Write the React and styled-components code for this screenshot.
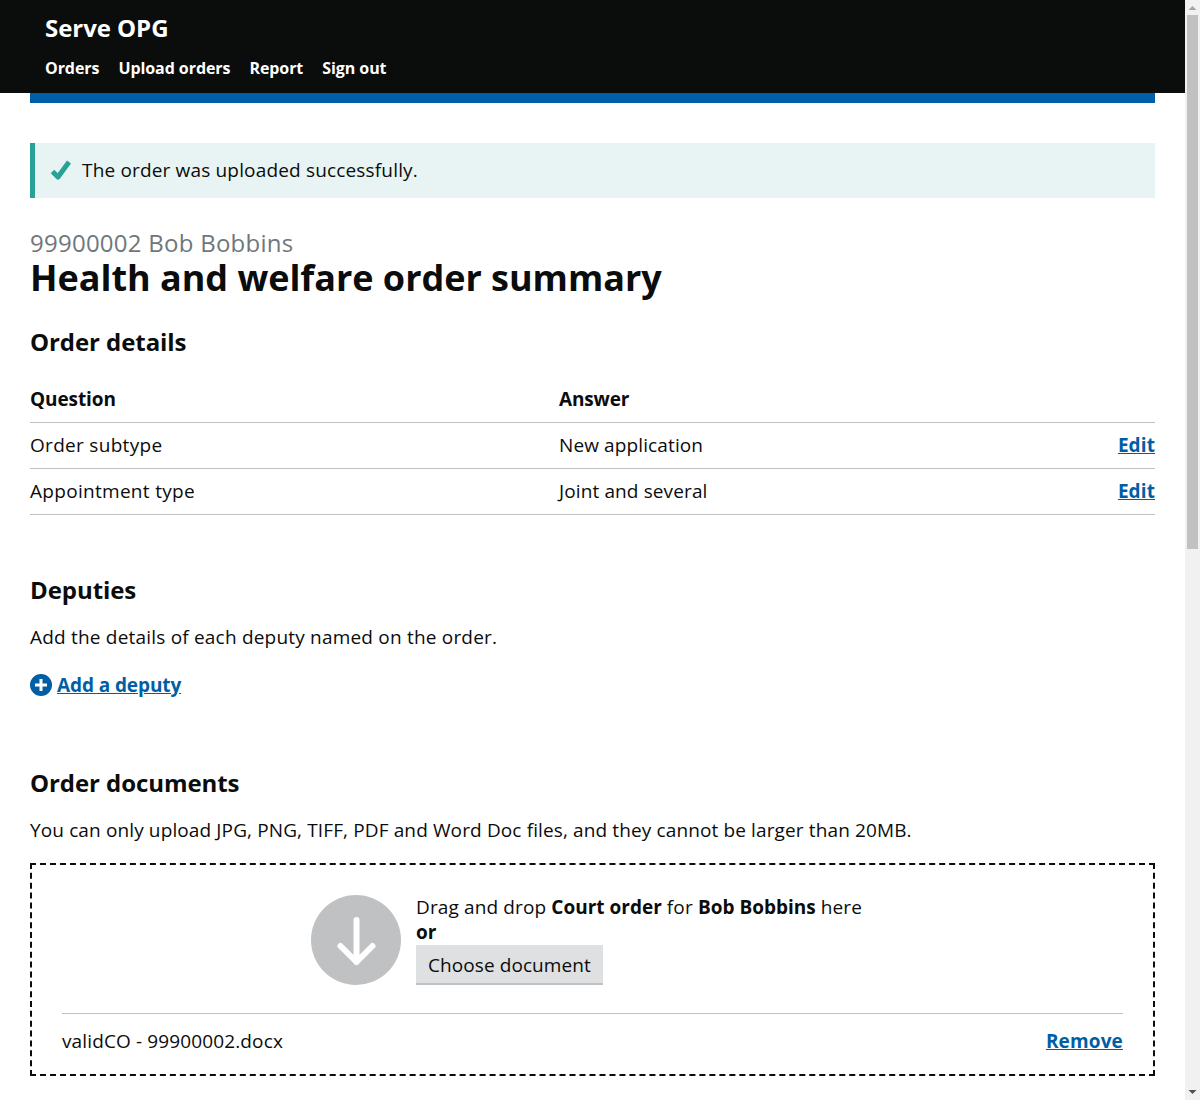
import React from "react";
import styled, { createGlobalStyle } from "styled-components";

const Global = createGlobalStyle`
  body { margin: 0; font-family: "Open Sans", "Noto Sans", sans-serif; color: #0b0c0c; background: #fff; }
`;

const Shell = styled.div`
  display: flex;
  align-items: flex-start;
`;
const Page = styled.div`
  flex: 1;
  min-width: 0;
`;
const ScrollTrack = styled.div`
  flex: none;
  width: 15px;
  height: 1100px;
  background: #f1f1f1;
  display: flex;
  flex-direction: column;
  align-items: center;
  justify-content: space-between;
`;
const ScrollArrow = styled.svg`
  flex: none;
  display: block;
`;
const ScrollThumb = styled.div`
  width: 11px;
  height: 534px;
  background: #c1c1c1;
  margin-bottom: auto;
`;
const Header = styled.header`
  background: #0b0c0c;
  height: 93px;
  box-sizing: border-box;
  padding: 10px 45px 0;
  color: #fff;
`;
const Brand = styled.div`
  font-size: 24px;
  font-weight: 700;
  line-height: 35px;
  letter-spacing: -0.05px;
`;
const Nav = styled.nav`
  display: flex;
  gap: 19px;
  margin-top: 6px;
`;
const NavLink = styled.a`
  font-size: 16px;
  font-weight: 700;
  line-height: 34px;
  letter-spacing: -0.07px;
  color: #fff;
`;
const Main = styled.main`
  margin: 0 30px;
  padding-bottom: 24px;
`;
const BlueBar = styled.div`
  height: 10px;
  background: #005ea5;
`;
const Notice = styled.div`
  margin-top: 40px;
  height: 55px;
  box-sizing: border-box;
  border-left: 5px solid #28a197;
  background: #e7f4f3;
  display: flex;
  align-items: center;
  padding: 0 0 1px 15px;
  gap: 11px;
  font-size: 19px;
  letter-spacing: 0.167px;
`;
const Caption = styled.div`
  margin-top: 30px;
  font-size: 24px;
  line-height: 30px;
  color: #6f777b;
  letter-spacing: 0.25px;
`;
const Title = styled.h1`
  margin: 0;
  font-size: 36px;
  line-height: 40px;
  font-weight: 700;
  letter-spacing: -0.03px;
`;
const SectionTitle = styled.h2`
  margin: ${p => p.$top}px 0 0;
  font-size: 24px;
  line-height: 30px;
  font-weight: 700;
  letter-spacing: -0.07px;
`;
const Table = styled.div`
  margin-top: 20px;
`;
const Row = styled.div`
  display: grid;
  grid-template-columns: 529px 1fr auto;
  align-items: center;
  height: 46px;
  box-sizing: border-box;
  padding-bottom: 2px;
  border-bottom: 1px solid #bfc1c3;
  font-size: 19px;
  font-weight: ${p => (p.$head ? 700 : 400)};
  letter-spacing: ${p => (p.$head ? -0.15 : 0.12)}px;
`;
const QuestionCell = styled.span`
  letter-spacing: ${p => (p.$head ? -0.1 : 0.3)}px;
`;
const Body = styled.p`
  margin: ${p => p.$top}px 0 0;
  font-size: 19px;
  line-height: 25px;
  letter-spacing: ${p => p.$spacing}px;
`;
const Link = styled.a`
  color: #005ea5;
  font-size: 19px;
  font-weight: 700;
  letter-spacing: ${p => p.$spacing || 0}px;
  text-decoration: underline;
`;
const AddRow = styled.div`
  margin-top: 22px;
  display: flex;
  align-items: center;
  gap: 5px;
  height: 25px;
`;
const Drop = styled.div`
  margin-top: 20px;
  border: 2px dashed #0b0c0c;
  padding: 30px 30px 0;
  height: 213px;
  box-sizing: border-box;
`;
const DropTop = styled.div`
  display: flex;
  gap: 15px;
  padding-left: 249px;
  padding-bottom: 28px;
  border-bottom: 1px solid #bfc1c3;
`;
const DropText = styled.div`
  font-size: 19px;
  line-height: 25px;
  letter-spacing: 0.13px;
`;
const Strong = styled.b`
  font-weight: 700;
  letter-spacing: 0;
`;
const ChooseButton = styled.button`
  display: block;
  height: 38px;
  padding: 2px 12px 0;
  border: 0;
  background: #dee0e2;
  box-shadow: 0 2px 0 #bfc1c3;
  box-sizing: border-box;
  font: 400 19px "Open Sans", sans-serif;
  letter-spacing: 0.08px;
  color: #0b0c0c;
`;
const FileRow = styled.div`
  display: flex;
  justify-content: space-between;
  align-items: center;
  height: 55px;
  padding-bottom: 2px;
  box-sizing: border-box;
  font-size: 19px;
  letter-spacing: 0.13px;
`;

const Check = () => (
  <svg width="21" height="21" viewBox="0 0 21 21">
    <path d="M2.5 11.5l5.5 5.5L19 2" fill="none" stroke="#28a197" strokeWidth="5" strokeLinejoin="round" />
  </svg>
);
const Plus = () => (
  <svg width="22" height="22" viewBox="0 0 22 22">
    <circle cx="11" cy="11" r="11" fill="#005ea5" />
    <path d="M11 5v12M5 11h12" stroke="#fff" strokeWidth="3" />
  </svg>
);
const DownCircle = () => (
  <svg width="90" height="90" viewBox="0 0 90 90">
    <circle cx="45" cy="45" r="45" fill="#bfc1c3" />
    <path d="M45.5 25v42M29.5 51l16 16 16-16" fill="none" stroke="#fff" strokeWidth="6" strokeLinecap="round" strokeLinejoin="round" />
  </svg>
);

export default function App() {
  return (
    <Shell>
      <Global />
      <Page>
        <Header>
          <Brand>Serve OPG</Brand>
          <Nav>
            <NavLink>Orders</NavLink>
            <NavLink>Upload orders</NavLink>
            <NavLink>Report</NavLink>
            <NavLink>Sign out</NavLink>
          </Nav>
        </Header>
        <Main>
          <BlueBar />
          <Notice><Check />The order was uploaded successfully.</Notice>
          <Caption>99900002 Bob Bobbins</Caption>
          <Title>Health and welfare order summary</Title>
          <SectionTitle $top={29}>Order details</SectionTitle>
          <Table>
            <Row $head><QuestionCell $head>Question</QuestionCell><span>Answer</span><span /></Row>
            <Row><QuestionCell>Order subtype</QuestionCell><span>New application</span><Link href="#" $spacing={0.1}>Edit</Link></Row>
            <Row><QuestionCell>Appointment type</QuestionCell><span>Joint and several</span><Link href="#" $spacing={0.1}>Edit</Link></Row>
          </Table>
          <SectionTitle $top={60}>Deputies</SectionTitle>
          <Body $top={20} $spacing={0.2}>Add the details of each deputy named on the order.</Body>
          <AddRow><Plus /><Link href="#" $spacing={-0.1}>Add a deputy</Link></AddRow>
          <SectionTitle $top={71}>Order documents</SectionTitle>
          <Body $top={20} $spacing={0.126}>You can only upload JPG, PNG, TIFF, PDF and Word Doc files, and they cannot be larger than 20MB.</Body>
          <Drop>
            <DropTop>
              <DownCircle />
              <DropText>
                Drag and drop <Strong>Court order</Strong> for <Strong>Bob Bobbins</Strong> here<br />
                <Strong>or</Strong>
                <ChooseButton>Choose document</ChooseButton>
              </DropText>
            </DropTop>
            <FileRow><span>validCO - 99900002.docx</span><Link href="#" $spacing={0.15}>Remove</Link></FileRow>
          </Drop>
        </Main>
      </Page>
      <ScrollTrack>
        <ScrollArrow width="15" height="15" viewBox="0 0 15 15"><path d="M3.5 10h8l-4-4z" fill="#a3a3a3" /></ScrollArrow>
        <ScrollThumb />
        <ScrollArrow width="15" height="15" viewBox="0 0 15 15"><path d="M3.5 5h8l-4 4z" fill="#505050" /></ScrollArrow>
      </ScrollTrack>
    </Shell>
  );
}
